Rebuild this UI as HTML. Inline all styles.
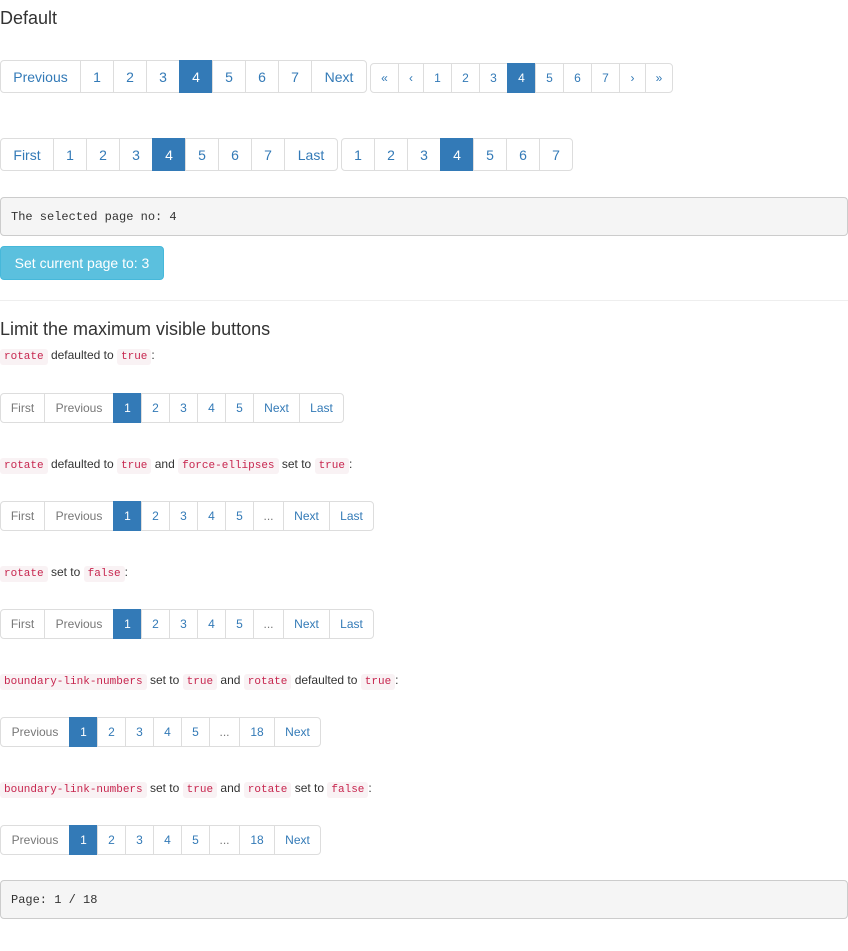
<!DOCTYPE html>
<html><head><meta charset="utf-8"><style>
body{margin:0;width:848px;height:951px;background:#fff;font-family:"Liberation Sans",Arial,sans-serif;color:#333;position:relative;overflow:hidden}
.a{position:absolute}
.p{position:absolute;display:flex}
.p span{box-sizing:border-box;border:1px solid #ddd;margin-left:-1px;display:flex;align-items:center;justify-content:center;color:#337ab7;background:#fff}
.p span:first-child{margin-left:0;border-radius:4px 0 0 4px}
.p span:last-child{border-radius:0 4px 4px 0}
.p span.on{background:#337ab7;border-color:#337ab7;color:#fff}
.p span.d{color:#777}
.L span{height:33px;font-size:14px}
.S span{height:30px;font-size:12px}
h3{position:absolute;margin:0;font-size:18px;font-weight:normal;left:0}
pre{position:absolute;margin:0;left:0;width:848px;box-sizing:border-box;background:#f5f5f5;border:1px solid #ccc;border-radius:4px;font-family:"Liberation Mono",monospace;font-size:12px;padding:0 10px;display:flex;align-items:center;color:#333}
.t{position:absolute;left:0;font-size:12px}
code{font-family:"Liberation Mono",monospace;font-size:11px;color:#c7254e;background:#f9f2f4;padding:2px 4px;border-radius:3px}
</style></head><body>
<h3 style="top:8px">Default</h3>
<div class="p L" style="left:0;top:60px">
<span style="width:81px">Previous</span><span style="width:34px">1</span><span style="width:34px">2</span><span style="width:34px">3</span><span class="on" style="width:34px">4</span><span style="width:34px">5</span><span style="width:34px">6</span><span style="width:34px">7</span><span style="width:56px">Next</span></div>
<div class="p S" style="left:370px;top:63px">
<span style="width:29px">«</span><span style="width:26px">‹</span><span style="width:29px">1</span><span style="width:29px">2</span><span style="width:29px">3</span><span class="on" style="width:29px">4</span><span style="width:29px">5</span><span style="width:29px">6</span><span style="width:29px">7</span><span style="width:27px">›</span><span style="width:28px">»</span></div>
<div class="p L" style="left:0;top:138px">
<span style="width:54px">First</span><span style="width:34px">1</span><span style="width:34px">2</span><span style="width:34px">3</span><span class="on" style="width:34px">4</span><span style="width:34px">5</span><span style="width:34px">6</span><span style="width:34px">7</span><span style="width:54px">Last</span></div>
<div class="p L" style="left:341px;top:138px">
<span style="width:34px">1</span><span style="width:34px">2</span><span style="width:34px">3</span><span class="on" style="width:34px">4</span><span style="width:34px">5</span><span style="width:34px">6</span><span style="width:34px">7</span></div>
<pre style="top:197px;height:39px">The selected page no: 4</pre>
<div class="a" style="left:0;top:246px;width:164px;height:34px;background:#5bc0de;border:1px solid #46b8da;box-sizing:border-box;border-radius:4px;color:#fff;font-size:14px;display:flex;align-items:center;justify-content:center">Set current page to: 3</div>
<div class="a" style="left:0;top:300px;width:848px;border-top:1px solid #eee"></div>
<h3 style="top:319px">Limit the maximum visible buttons</h3>
<div class="t" style="top:348px"><code>rotate</code> defaulted to <code>true</code>:</div>
<div class="p S" style="left:0;top:393px">
<span class="d" style="width:45px">First</span><span class="d" style="width:70px">Previous</span><span class="on" style="width:29px">1</span><span style="width:29px">2</span><span style="width:29px">3</span><span style="width:29px">4</span><span style="width:29px">5</span><span style="width:47px">Next</span><span style="width:45px">Last</span></div>
<div class="t" style="top:457px"><code>rotate</code> defaulted to <code>true</code> and <code>force-ellipses</code> set to <code>true</code>:</div>
<div class="p S" style="left:0;top:501px">
<span class="d" style="width:45px">First</span><span class="d" style="width:70px">Previous</span><span class="on" style="width:29px">1</span><span style="width:29px">2</span><span style="width:29px">3</span><span style="width:29px">4</span><span style="width:29px">5</span><span class="d" style="width:31px">...</span><span style="width:47px">Next</span><span style="width:45px">Last</span></div>
<div class="t" style="top:565px"><code>rotate</code> set to <code>false</code>:</div>
<div class="p S" style="left:0;top:609px">
<span class="d" style="width:45px">First</span><span class="d" style="width:70px">Previous</span><span class="on" style="width:29px">1</span><span style="width:29px">2</span><span style="width:29px">3</span><span style="width:29px">4</span><span style="width:29px">5</span><span class="d" style="width:31px">...</span><span style="width:47px">Next</span><span style="width:45px">Last</span></div>
<div class="t" style="top:673px"><code>boundary-link-numbers</code> set to <code>true</code> and <code>rotate</code> defaulted to <code>true</code>:</div>
<div class="p S" style="left:0;top:717px">
<span class="d" style="width:70px">Previous</span><span class="on" style="width:29px">1</span><span style="width:29px">2</span><span style="width:29px">3</span><span style="width:29px">4</span><span style="width:29px">5</span><span class="d" style="width:31px">...</span><span style="width:36px">18</span><span style="width:47px">Next</span></div>
<div class="t" style="top:781px"><code>boundary-link-numbers</code> set to <code>true</code> and <code>rotate</code> set to <code>false</code>:</div>
<div class="p S" style="left:0;top:825px">
<span class="d" style="width:70px">Previous</span><span class="on" style="width:29px">1</span><span style="width:29px">2</span><span style="width:29px">3</span><span style="width:29px">4</span><span style="width:29px">5</span><span class="d" style="width:31px">...</span><span style="width:36px">18</span><span style="width:47px">Next</span></div>
<pre style="top:880px;height:39px">Page: 1 / 18</pre>
</body></html>
